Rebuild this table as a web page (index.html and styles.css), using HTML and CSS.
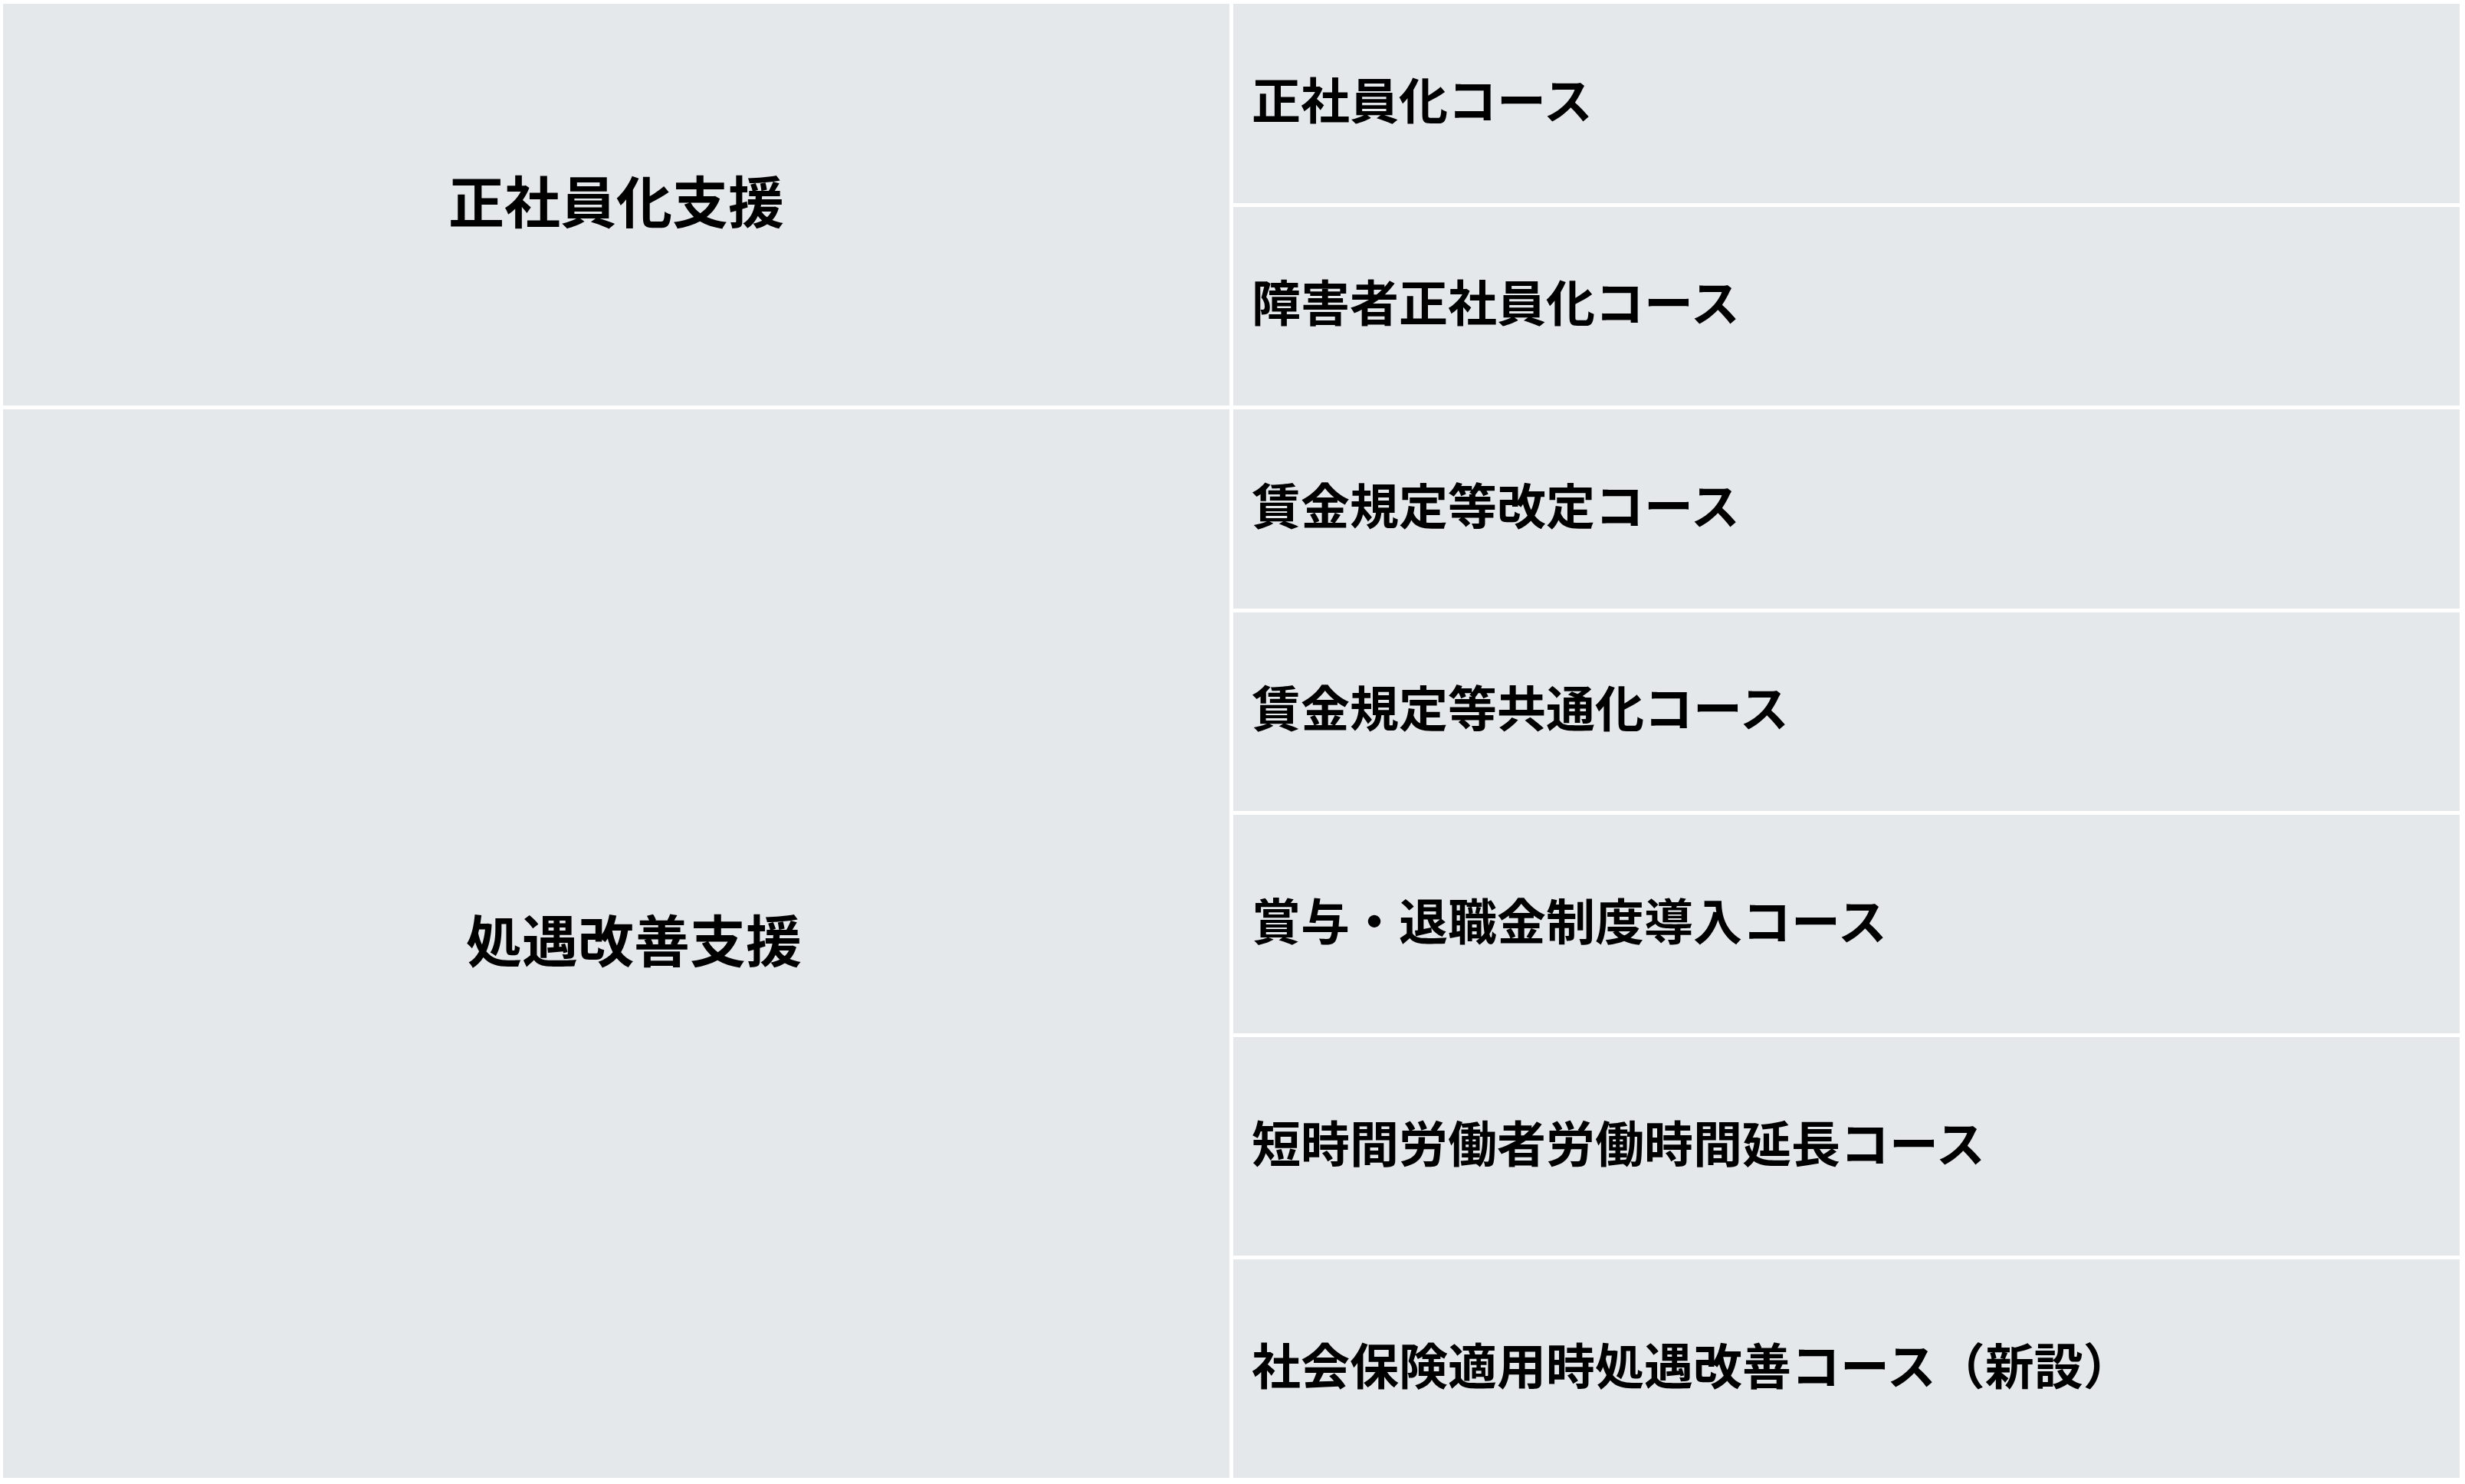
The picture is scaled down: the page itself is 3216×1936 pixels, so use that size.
FILE: index.html
```html
<!DOCTYPE html>
<html lang="ja">
<head>
<meta charset="utf-8">
<title>助成金コース一覧</title>
<link rel="stylesheet" href="styles.css">
</head>
<body>
<div class="course-table">
  <div class="group group-regular">正社員化支援</div>
  <div class="course">正社員化コース</div>
  <div class="course">障害者正社員化コース</div>
  <div class="group group-treatment">処遇改善支援</div>
  <div class="course">賃金規定等改定コース</div>
  <div class="course">賃金規定等共通化コース</div>
  <div class="course">賞与・退職金制度導入コース</div>
  <div class="course">短時間労働者労働時間延長コース</div>
  <div class="course">社会保険適用時処遇改善コース（新設）</div>
</div>
</body>
</html>
```
FILE: styles.css
```css
html, body {
  margin: 0;
  padding: 0;
  background: #ffffff;
}

body {
  font-family: "Noto Sans CJK JP", "Noto Sans", sans-serif;
  color: #000000;
  font-weight: 700;
}

.course-table {
  display: grid;
  grid-template-columns: 1600px 1600px;
  grid-template-rows: repeat(4, 259.5px) repeat(3, 285px);
  gap: 5px;
  padding: 5px 0 0 4px;
}

.group {
  grid-column: 1;
  background: #e5e8eb;
  display: flex;
  align-items: center;
  justify-content: center;
  font-size: 73px;
  line-height: 1;
  padding-bottom: 16px;
}

.group-regular {
  grid-row: 1 / span 2;
}

.group-treatment {
  grid-row: 3 / span 5;
  padding-left: 46px;
}

.course {
  grid-column: 2;
  background: #e5e8eb;
  display: flex;
  align-items: center;
  padding-left: 24px;
  padding-bottom: 16px;
  font-size: 64px;
  line-height: 1;
}
```
